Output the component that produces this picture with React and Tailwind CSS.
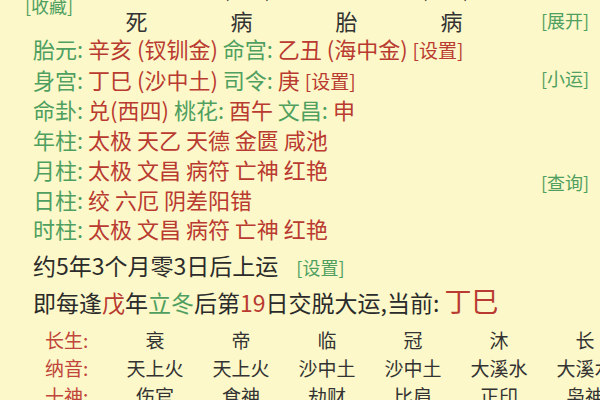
import React from "react";

const G = "text-[#4f9f60]";
const R = "text-[#b93a30]";

function Row({ label, children }) {
  return (
    <div className="leading-[29.7px] whitespace-nowrap">
      <span className={G}>{label}: </span>
      {children}
    </div>
  );
}

const table = [
  { label: "长生", items: ["衰", "帝", "临", "冠", "沐", "长"] },
  { label: "纳音", items: ["天上火", "天上火", "沙中土", "沙中土", "大溪水", "大溪水"] },
  { label: "十神", items: ["伤官", "食神", "劫财", "比肩", "正印", "枭神"] },
];

export default function App() {
  return (
    <div
      className="w-[600px] h-[400px] overflow-hidden bg-[#fcf8c9] text-[#2b2b2b]"
      style={{ fontFamily: '"Noto Sans CJK SC", "Noto Sans", sans-serif' }}
    >
      {/* cut off top line */}
      <div className="-mt-[5px] mb-[-9px] h-[20px] flex items-center text-[18px] leading-[20px] whitespace-nowrap">
        <span className={"ml-[25px] " + G}>[收藏]</span>
        <span className="ml-[150px] -mt-[30px]">(甲子)</span>
        <span className="ml-[150px] -mt-[30px]">(丙寅)</span>
      </div>

      <div className="flex">
        <div className="flex-1 pl-[33px] text-[22px]">
          <div className="grid grid-cols-[repeat(4,105px)] ml-[51px] leading-[28px] text-[#333] text-center">
            <span>死</span>
            <span>病</span>
            <span>胎</span>
            <span>病</span>
          </div>
          <Row label="胎元">
            <span className={R}>辛亥 (钗钏金) </span>
            <span className={G}>命宫: </span>
            <span className={R}>乙丑 (海中金) </span>
            <span className={"text-[19px] " + R}> [设置]</span>
          </Row>
          <Row label="身宫">
            <span className={R}>丁巳 (沙中土) </span>
            <span className={G}>司令: </span>
            <span className={R}>庚 </span>
            <span className={"text-[19px] " + R}> [设置]</span>
          </Row>
          <Row label="命卦">
            <span className={R}>兑(西四) </span>
            <span className={G}>桃花: </span>
            <span className={R}>酉午 </span>
            <span className={G}>文昌: </span>
            <span className={R}>申</span>
          </Row>
          <Row label="年柱">
            <span className={R}>太极 天乙 天德 金匮 咸池</span>
          </Row>
          <Row label="月柱">
            <span className={R}>太极 文昌 病符 亡神 红艳</span>
          </Row>
          <Row label="日柱">
            <span className={R}>绞 六厄 阴差阳错</span>
          </Row>
          <Row label="时柱">
            <span className={R}>太极 文昌 病符 亡神 红艳</span>
          </Row>
        </div>
        <div className={"w-[59px] flex flex-col text-[18px] " + G}>
          <span className="leading-[28px]">[展开]</span>
          <span className="mt-[30px] leading-[28px]">[小运]</span>
          <span className="mt-[76px] leading-[28px]">[查询]</span>
        </div>
      </div>

      <div className="pl-[33px] text-[23px] whitespace-nowrap">
        <div className="mt-[4px] leading-[34px]">
          约5年3个月零3日后上运
          <span className={"ml-[18px] text-[18px] " + G}>[设置]</span>
        </div>
        <div className="leading-[34px]">
          即每逢<span className={R}>戊</span>年<span className={G}>立冬</span>后第
          <span className={R}>19</span>日交脱大运,当前:{" "}
          <span className={"text-[27px] " + R}>丁巳</span>
        </div>
      </div>

      <div className="mt-[7px] pl-[45px] text-[19px] whitespace-nowrap">
        {table.map((row) => (
          <div key={row.label} className="grid grid-cols-[67px_repeat(6,86px)] leading-[28px]">
            <span className="text-[#c0453a]">{row.label}:</span>
            {row.items.map((it, i) => (
              <span key={i} className="text-center text-[#333]">
                {it}
              </span>
            ))}
          </div>
        ))}
      </div>
    </div>
  );
}
